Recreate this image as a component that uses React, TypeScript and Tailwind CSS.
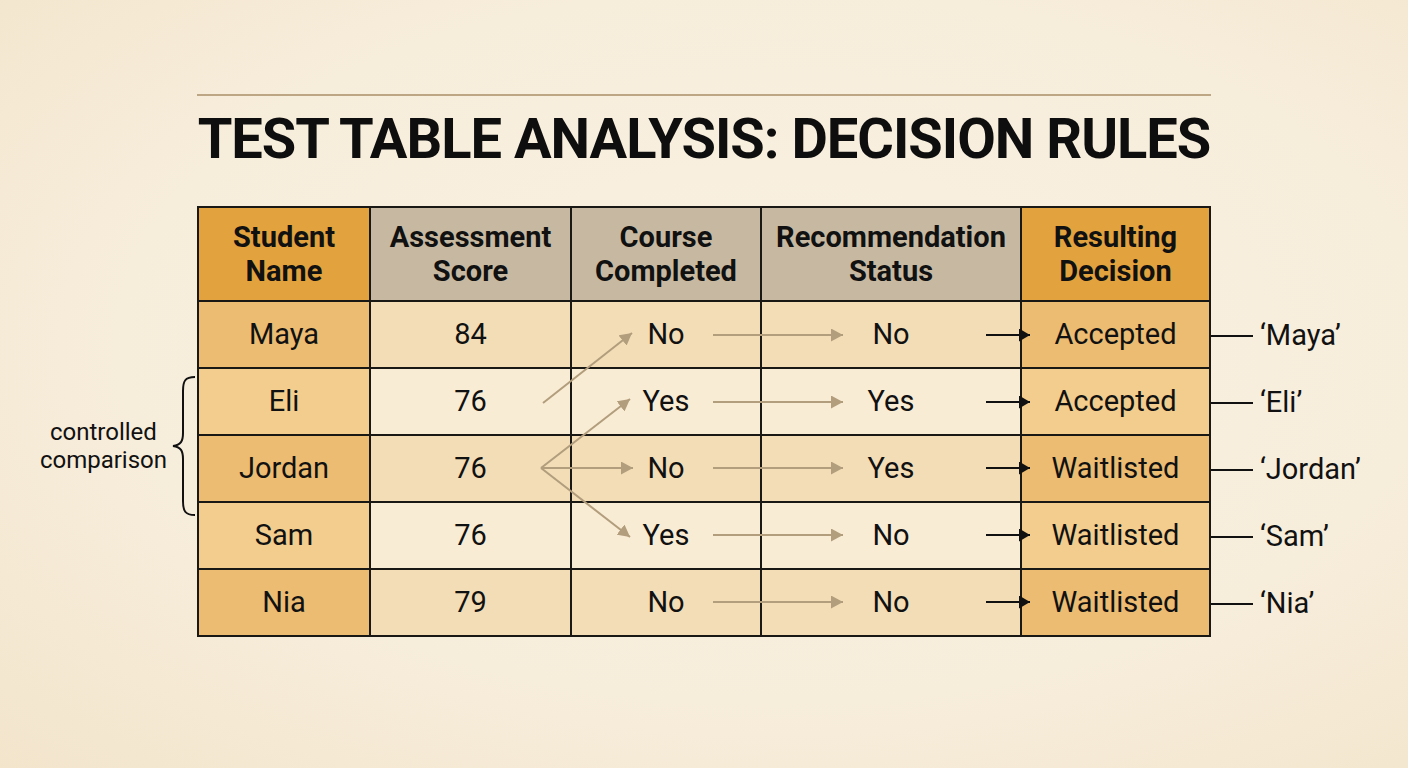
const headers = [
  { lines: ["Student", "Name"], accent: true },
  { lines: ["Assessment", "Score"], accent: false },
  { lines: ["Course", "Completed"], accent: false },
  { lines: ["Recommendation", "Status"], accent: false },
  { lines: ["Resulting", "Decision"], accent: true },
];

const rows = [
  { name: "Maya", score: "84", course: "No", rec: "No", decision: "Accepted" },
  { name: "Eli", score: "76", course: "Yes", rec: "Yes", decision: "Accepted" },
  { name: "Jordan", score: "76", course: "No", rec: "Yes", decision: "Waitlisted" },
  { name: "Sam", score: "76", course: "Yes", rec: "No", decision: "Waitlisted" },
  { name: "Nia", score: "79", course: "No", rec: "No", decision: "Waitlisted" },
];

// row centres relative to the table's top-left corner
const rowY = [129, 196, 262, 329, 396];

const FlowArrows = () => (
  <svg
    className="absolute left-0 top-0 pointer-events-none"
    width={1014}
    height={432}
    viewBox="0 0 1014 432"
  >
    <defs>
      <marker id="tan" markerUnits="userSpaceOnUse" markerWidth="13" markerHeight="13" refX="12" refY="6.5" orient="auto">
        <path d="M0,0 L12,6.5 L0,13 z" fill="#b29d7c" />
      </marker>
      <marker id="ink" markerUnits="userSpaceOnUse" markerWidth="12" markerHeight="13" refX="11" refY="6.5" orient="auto">
        <path d="M0,0 L11,6.5 L0,13 z" fill="#111" />
      </marker>
    </defs>
    <g stroke="#b29d7c" strokeWidth="2" fill="none">
      <line x1="346" y1="197" x2="435" y2="127" markerEnd="url(#tan)" />
      <line x1="344" y1="262" x2="433" y2="193" markerEnd="url(#tan)" />
      <line x1="344" y1="262" x2="436" y2="262" markerEnd="url(#tan)" />
      <line x1="344" y1="262" x2="433" y2="331" markerEnd="url(#tan)" />
      {rowY.map((y) => (
        <line key={y} x1="516" y1={y} x2="646" y2={y} markerEnd="url(#tan)" />
      ))}
    </g>
    <g stroke="#111" strokeWidth="2">
      {rowY.map((y) => (
        <line key={y} x1="789" y1={y} x2="833" y2={y} markerEnd="url(#ink)" />
      ))}
    </g>
  </svg>
);

const Brace = () => (
  <svg width="26" height="142" viewBox="0 0 26 142" className="shrink-0">
    <path
      d="M24,2 C14,2 12,6 12,16 L12,58 C12,66 10,70 2,71 C10,72 12,76 12,84 L12,126 C12,136 14,140 24,140"
      fill="none"
      stroke="#111"
      strokeWidth="2"
    />
  </svg>
);

export default function App() {
  return (
    <div
      className="w-[1408px] h-[768px] overflow-hidden bg-[radial-gradient(ellipse_at_55%_45%,#f9f1e2_0%,#f7eddb_60%,#f3e5cc_100%)] text-[#111]"
      style={{ fontFamily: "Roboto, 'Noto Sans', sans-serif" }}
    >
      <div className="w-[1014px] mx-auto pt-[94px]">
        <div className="h-[2px] bg-[#bca683]" />
        <h1 className="mt-[15px] text-[56px] leading-[56px] font-bold text-center tracking-[-1px] text-[#0e0e0e] whitespace-nowrap">
          TEST TABLE ANALYSIS: DECISION RULES
        </h1>
      </div>

      <div className="mt-[39px] grid grid-cols-[197px_1014px_197px]">
        {/* left note */}
        <div className="pt-[169px] flex justify-end items-start">
          <div className="flex items-center gap-[4px]">
            <div className="text-[24px] leading-[28px] text-center text-[#111]">
              <div>controlled</div>
              <div>comparison</div>
            </div>
            <Brace />
          </div>
        </div>

        {/* table */}
        <div className="relative">
          <div className="grid grid-cols-[170px_199px_188px_258px_187px] gap-[2px] p-[2px] bg-[#1a1814]">
            {headers.map((h) => (
              <div
                key={h.lines[0]}
                className={`h-[92px] flex flex-col items-center justify-center text-[29px] leading-[34px] font-bold ${
                  h.accent ? "bg-[#e2a23d]" : "bg-[#c7b9a1]"
                }`}
              >
                {h.lines.map((l) => (
                  <div key={l}>{l}</div>
                ))}
              </div>
            ))}
            {rows.map((r, i) => {
              const even = i % 2 === 1;
              const accentBg = even ? "bg-[#f2cd8d]" : "bg-[#ebbc72]";
              const plainBg = even ? "bg-[#f9ecd5]" : "bg-[#f3ddb7]";
              return [
                { v: r.name, bg: accentBg },
                { v: r.score, bg: plainBg },
                { v: r.course, bg: plainBg },
                { v: r.rec, bg: plainBg },
                { v: r.decision, bg: accentBg },
              ].map((c, j) => (
                <div
                  key={`${i}-${j}`}
                  className={`h-[65px] flex items-center justify-center text-[29px] ${c.bg}`}
                >
                  {c.v}
                </div>
              ));
            })}
          </div>
          <FlowArrows />
        </div>

        {/* right labels */}
        <div className="pt-[96px] flex flex-col">
          {rows.map((r) => (
            <div key={r.name} className="h-[67px] flex items-center gap-[7px]">
              <div className="w-[42px] h-[2px] bg-[#111]" />
              <span className="text-[29px]">‘{r.name}’</span>
            </div>
          ))}
        </div>
      </div>
    </div>
  );
}
